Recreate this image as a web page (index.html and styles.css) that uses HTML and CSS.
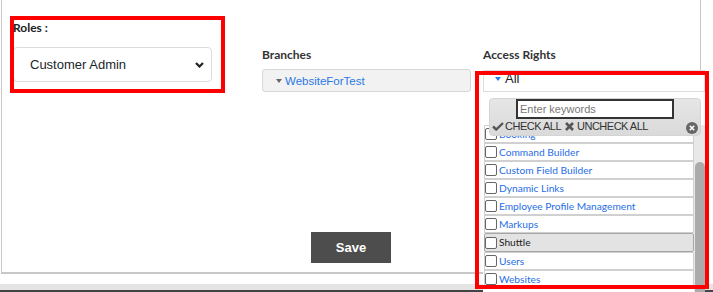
FILE: index.html
```html
<!DOCTYPE html>
<html>
<head>
<meta charset="utf-8">
<link rel="stylesheet" href="styles.css">
</head>
<body>
<div class="page">
  <div class="panel">
    <div class="fields">
      <div class="col col-roles">
        <div class="label">Roles :</div>
        <div class="select">
          <span>Customer Admin</span>
          <svg class="chev" width="9" height="6" viewBox="0 0 9 6"><path d="M1 1 L4.5 4.5 L8 1" fill="none" stroke="#222" stroke-width="2.2"/></svg>
        </div>
        <div class="annot annot-roles"></div>
      </div>
      <div class="col col-branches">
        <div class="label">Branches</div>
        <div class="tree-box"><span class="caret caret-gray"></span><span class="branch-link">WebsiteForTest</span></div>
      </div>
      <div class="col col-access">
        <div class="label">Access Rights</div>
        <div class="ms">
          <div class="ms-button"><span class="caret caret-blue"></span><span>All</span></div>
          <div class="ms-menu">
            <div class="ms-header">
              <input class="ms-filter" type="text" placeholder="Enter keywords">
              <div class="ms-actions">
                <span class="act"><svg class="ico-check" width="12" height="9" viewBox="0 0 12 9"><path d="M1 4.5 L4.2 7.5 L11 1" fill="none" stroke="#555" stroke-width="2.4"/></svg>CHECK ALL</span>
                <span class="act act-un"><svg class="ico-x" width="9" height="9" viewBox="0 0 9 9"><path d="M1 1 L8 8 M8 1 L1 8" fill="none" stroke="#555" stroke-width="2.6"/></svg>UNCHECK ALL</span>
              </div>
              <span class="ms-close"><svg width="12" height="12" viewBox="0 0 12 12"><circle cx="6" cy="6" r="6" fill="#666"/><path d="M3.8 3.8 L8.2 8.2 M8.2 3.8 L3.8 8.2" stroke="#fff" stroke-width="1.6"/></svg></span>
            </div>
            <div class="ms-body">
              <ul class="ms-list">
                <li><span class="cb"></span><a>Booking</a></li>
                <li><span class="cb"></span><a>Command Builder</a></li>
                <li><span class="cb"></span><a>Custom Field Builder</a></li>
                <li><span class="cb"></span><a>Dynamic Links</a></li>
                <li><span class="cb"></span><a>Employee Profile Management</a></li>
                <li><span class="cb"></span><a>Markups</a></li>
                <li class="active"><span class="cb"></span><a>Shuttle</a></li>
                <li><span class="cb"></span><a>Users</a></li>
                <li><span class="cb"></span><a>Websites</a></li>
              </ul>
              <div class="scroll"><div class="thumb"></div></div>
            </div>
          </div>
        </div>
        <div class="annot annot-access"></div>
      </div>
    </div>
    <div class="actions"><button class="save">Save</button></div>
  </div>
  <div class="footer"></div>
</div>
</body>
</html>
```

FILE: styles.css
```css
* { box-sizing: border-box; }
html, body { margin: 0; padding: 0; background: #fff; overflow: hidden; }
body { font-family: "Lato", "Liberation Sans", sans-serif; }

.page { width: 713px; height: 292px; overflow: hidden; position: relative; }

.panel {
  margin-left: 1px;
  width: 700px;
  height: 274px;
  border-left: 1px solid #c8c8c8;
  border-right: 1px solid #c8c8c8;
  border-bottom: 2px solid #c8c8c8;
}

.fields {
  display: flex;
  align-items: flex-start;
  height: 92px;
  padding: 21px 0 0 11px;
}

.col { position: relative; flex: none; }
.col-roles { width: 199px; }
.col-branches { width: 209px; margin-left: 50px; margin-top: 27px; }
.col-access { width: 222px; margin-left: 12px; margin-top: 27px; }

.label {
  font: bold 12px/14px "Lato", "Liberation Sans", sans-serif;
  color: #333;
}
.col-roles .label { color: #222; }

.select {
  margin-top: 12px;
  height: 35px;
  border: 1px solid #dcdcdc;
  border-radius: 4px;
  background: #fff;
  display: flex;
  align-items: center;
  justify-content: space-between;
  padding: 0 7px 0 16px;
  font: 13px/15px "Liberation Sans", Arial, sans-serif;
  color: #212529;
}

.tree-box {
  margin-top: 7px;
  height: 23px;
  background: #f2f2f2;
  border: 1px solid #d8d8d8;
  border-radius: 3px;
  display: flex;
  align-items: center;
  padding-left: 13px;
}

.caret {
  display: inline-block;
  width: 0;
  height: 0;
  border-left: 3.5px solid transparent;
  border-right: 3.5px solid transparent;
  border-top: 4px solid #666;
}
.caret-gray { margin-right: 3px; }
.caret-blue { border-top-color: #2a78e4; margin: 6px 4px 0 0; }

.branch-link {
  font: 11.5px/14px "Liberation Sans", Arial, sans-serif;
  color: #2a78e6;
}

.ms { position: relative; margin-top: 8px; }

.ms-button {
  height: 22px;
  border: 1px solid #ddd;
  background: #fff;
  display: flex;
  align-items: flex-start;
  padding-left: 11px;
  font: 13px/15px "Liberation Sans", Arial, sans-serif;
  color: #222;
}

.ms-menu {
  position: absolute;
  left: 0;
  top: 100%;
  width: 222px;
  height: 210px;
  background: #fff;
  z-index: 2;
}

.ms-header {
  position: relative;
  z-index: 1;
  margin: 6px 4px 0 6px;
  height: 38px;
  border: 1px solid #d4d4d4;
  border-radius: 4px;
  background: linear-gradient(#e6e6e6, #dadada);
}

.ms-filter {
  display: block;
  margin: 0 0 0 26px;
  width: 158px;
  height: 20px;
  border: 2px solid #333;
  padding: 0 0 0 2px;
  font: 11px "Liberation Sans", Arial, sans-serif;
  background: #fff;
  outline: none;
}
.ms-filter::placeholder { color: #777; }

.ms-actions {
  display: flex;
  align-items: center;
  height: 13px;
  margin: 1px 0 0 2px;
  font: 11px/13px "Liberation Sans", Arial, sans-serif;
  letter-spacing: -0.5px;
  color: #333;
}
.act { display: flex; align-items: center; }
.ico-check { margin-right: 1px; }
.act-un { margin-left: 4px; }
.ico-x { margin-right: 3px; }

.ms-close {
  position: absolute;
  right: 2px;
  top: 23px;
  width: 12px;
  height: 12px;
  display: block;
}
.ms-close svg { display: block; }

.ms-body {
  display: flex;
  margin: -11px 0 0 1px;
  width: 221px;
}

.ms-list {
  list-style: none;
  margin: 0;
  padding: 0;
  width: 210px;
}
.ms-list li {
  height: 18px;
  border: 1px solid #d0d0d0;
  display: flex;
  align-items: center;
  background: #fff;
  font: 10.2px/13px "Lato", "Liberation Sans", sans-serif;
}
.ms-list li a { color: #1f6ee6; }
.ms-list li.active {
  height: 19px;
  background: #e3e3e3;
  border-color: #a6a6a6;
  border-radius: 2px;
}
.ms-list li.active a { color: #222; }

.cb {
  width: 12px;
  height: 12px;
  border: 1px solid #666;
  border-radius: 2px;
  background: #fff;
  margin-right: 2px;
  flex: none;
}

.scroll {
  position: relative;
  width: 11px;
  height: 210px;
  background: #e8e8e8;
}
.thumb {
  position: absolute;
  top: 37px;
  left: 1px;
  right: 0;
  bottom: 0;
  background: #ababab;
  border-radius: 5px 5px 0 0;
}

.annot {
  position: absolute;
  border: 4px solid #f00;
  pointer-events: none;
  z-index: 5;
}
.annot-roles { left: -3px; top: -5px; width: 215px; height: 77px; }
.annot-access { left: -8px; top: 23px; width: 234px; height: 218px; }

.actions {
  display: flex;
  justify-content: center;
  margin-top: 140px;
}
.save {
  width: 80px;
  height: 31px;
  padding: 0;
  border: 0;
  background: #4d4d4d;
  color: #fff;
  font: bold 13px "Liberation Sans", Arial, sans-serif;
}

.footer {
  margin-top: 10px;
  height: 8px;
  background: #e4e4e4;
  border-bottom: 2px solid #444;
}
```
